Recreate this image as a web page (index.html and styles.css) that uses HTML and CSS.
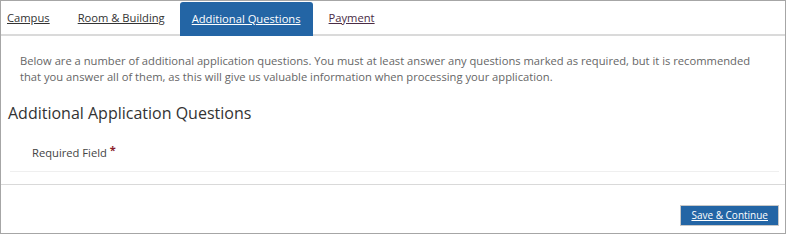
FILE: index.html
```html
<!DOCTYPE html>
<html>
<head>
<meta charset="utf-8">
<link rel="stylesheet" href="styles.css">
</head>
<body>
<div class="page">
  <nav class="tabs">
    <a class="tab first" href="#">Campus</a>
    <a class="tab" href="#">Room &amp; Building</a>
    <a class="tab active" href="#">Additional Questions</a>
    <a class="tab visited" href="#">Payment</a>
  </nav>
  <p class="intro">Below are a number of additional application questions. You must at least answer any questions marked as required, but it is recommended that you answer all of them, as this will give us valuable information when processing your application.</p>
  <h2 class="heading">Additional Application Questions</h2>
  <div class="required">Required Field <span class="star">*</span></div>
  <div class="footer">
    <a class="btn" href="#">Save &amp; Continue</a>
  </div>
</div>
</body>
</html>
```

FILE: styles.css
```css
html, body {
  margin: 0;
  padding: 0;
  background: #fff;
}
body {
  font-family: "Open Sans", "DejaVu Sans", sans-serif;
  font-size: 11.2px;
  color: #333;
}
.page {
  width: 786px;
  height: 234px;
  box-sizing: border-box;
  border: 1px solid #a6a6a6;
  overflow: hidden;
}
.tabs {
  display: flex;
  padding: 1px 0 0 6px;
  border-bottom: 2px solid #dadada;
  height: 32px;
}
.tab {
  display: flex;
  align-items: center;
  padding: 0 14px 1px;
  color: #333;
  text-decoration: underline;
  font-size: 11.2px;
  line-height: 16px;
}
.tab.first {
  padding-left: 0;
}
.tab.visited {
  color: #4a2c46;
}
.tab.active {
  background: #2365a5;
  color: #fff;
  padding: 0 12px 1px;
  margin: 0 2px -2px 1px;
  border-radius: 3px 3px 0 0;
}
.intro {
  margin: 17px 0 0;
  padding: 0 20px 0 19px;
  line-height: 16px;
  font-size: 11.2px;
  color: #666;
}
.heading {
  margin: 16px 0 0 7px;
  font-size: 16px;
  font-weight: normal;
  line-height: 24px;
  color: #333;
}
.required {
  margin: 20px 6px 0 9px;
  padding: 0 0 10px 22px;
  line-height: 16px;
  font-size: 11.2px;
  color: #444;
  border-bottom: 1px solid #efefef;
}
.star {
  color: #8b1d2c;
  font-size: 11px;
  font-weight: bold;
  position: relative;
  top: -3px;
}
.footer {
  margin-top: 12px;
  border-top: 1px solid #d9d9d9;
  display: flex;
  justify-content: flex-end;
  padding: 20px 6px 0 0;
}
.btn {
  display: block;
  background: #2365a5;
  color: #fff;
  border: 1px solid #c8c8c8;
  font-size: 10px;
  line-height: 19px;
  padding: 0 10px 0 10px;
  text-decoration: underline;
}
```
